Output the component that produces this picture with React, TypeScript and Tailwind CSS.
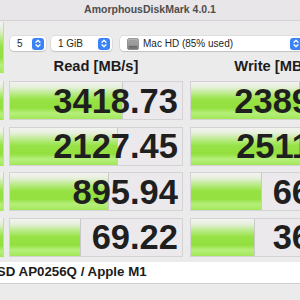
import React from "react";

const green =
  "bg-[linear-gradient(to_bottom,#f3f3f1_0%,#e6efdb_14%,#b4ea7c_34%,#97e246_48%,#92e03e_70%,#b6ef7c_84%,#a2e858_100%)]";

function Stepper() {
  return (
    <span className="flex h-[12px] w-[12px] items-center justify-center rounded-[3px] bg-[#3a83f6]">
      <svg width="6" height="9" viewBox="0 0 6 9" fill="none" stroke="white" strokeWidth="1.3" strokeLinecap="round" strokeLinejoin="round">
        <path d="M1 3.3 3 1.3 5 3.3" />
        <path d="M1 5.7 3 7.7 5 5.7" />
      </svg>
    </span>
  );
}

function Select({ w, children }: { w: string; children: React.ReactNode }) {
  return (
    <div className={`flex h-[15px] shrink-0 items-center justify-between rounded-[4px] bg-white pl-[7px] pr-[2px] text-[10px] text-[#262626] shadow-[0_0_0_0.5px_rgba(0,0,0,0.12),0_1px_1px_rgba(0,0,0,0.12)] ${w}`}>
      <span className="flex items-center gap-[3px]">{children}</span>
      <Stepper />
    </div>
  );
}

function Disk() {
  return (
    <svg width="12" height="12" viewBox="0 0 12 12">
      <defs>
        <linearGradient id="dk" x1="0" y1="0" x2="0" y2="1">
          <stop offset="0" stopColor="#b9b9b9" />
          <stop offset="1" stopColor="#7d7d7d" />
        </linearGradient>
      </defs>
      <rect x="0.5" y="0.5" width="11" height="11" rx="1.5" fill="url(#dk)" stroke="#6e6e6e" strokeWidth="0.6" />
      <rect x="2" y="2" width="8" height="4" rx="0.8" fill="#9d9d9d" />
      <rect x="2" y="8" width="8" height="0.8" fill="#5f5f5f" />
      <rect x="2" y="9.5" width="8" height="0.8" fill="#5f5f5f" />
    </svg>
  );
}

function Cell({ value, text }: { value: number; text: string }) {
  const w = Math.round(25 * (Math.log10(value) + 1));
  return (
    <div className="relative flex h-full w-[174px] shrink-0 items-center justify-end overflow-hidden border border-[#d4d2d4] bg-[#ebe9eb] pr-[4px]">
      <div className={`absolute left-0 top-0 h-full border-r border-[#c9c9c9] ${green}`} style={{ width: w }} />
      <span className="relative mt-[1px] text-[34.5px] font-bold leading-none text-[#1f1f1f]">{text}</span>
    </div>
  );
}

const rows = [
  { r: 3418.73, rt: "3418.73", w: 2389.51, wt: "2389.51" },
  { r: 2127.45, rt: "2127.45", w: 2511.37, wt: "2511.37" },
  { r: 895.94, rt: "895.94", w: 66.12, wt: "66.12" },
  { r: 69.22, rt: "69.22", w: 36.48, wt: "36.48" },
];

export default function App() {
  return (
    <div className="h-[300px] w-[300px] overflow-hidden bg-[#ecebec] font-['Liberation_Sans',Arial,sans-serif]">
      <div className="flex h-[21px] items-center justify-center border-b border-[#d3d1d3] bg-[#e8e6e8] text-[10.5px] font-bold text-[#4e4e4e]">
        AmorphousDiskMark 4.0.1
      </div>
      <div className="flex">
        <div className={`mt-[1px] h-[51px] w-[4px] shrink-0 border-r border-[#cfcfcf] ${green}`} />
        <div className="ml-[5px] flex flex-col">
          <div className="mt-[15px] flex gap-[5px] pl-[1px]">
            <Select w="w-[36px]">5</Select>
            <Select w="w-[61px] mr-[3px]">1 GiB</Select>
            <Select w="w-[184px]">
              <Disk />
              <span className="ml-[1px]">Mac HD (85% used)</span>
            </Select>
          </div>
          <div className="mt-[7px] flex gap-[7px] text-[14.7px] font-bold leading-[17px] text-[#1c1c1c]">
            <div className="w-[174px] shrink-0 text-center">Read [MB/s]</div>
            <div className="w-[174px] shrink-0 text-center">Write [MB/s]</div>
          </div>
        </div>
      </div>
      <div className="mt-[6px] flex flex-col gap-[6.5px]">
        {rows.map((row) => (
          <div key={row.rt} className="flex h-[39px]">
            <div className={`h-full w-[4px] shrink-0 border-r border-[#cfcfcf] ${green}`} />
            <div className="ml-[5px] flex h-full gap-[7px]">
              <Cell value={row.r} text={row.rt} />
              <Cell value={row.w} text={row.wt} />
            </div>
          </div>
        ))}
      </div>
      <div className="mt-[5px] flex h-[22px] items-center overflow-hidden whitespace-nowrap border-b border-[#d0ced0] bg-white">
        <span className="ml-[-12px] text-[13.3px] font-bold text-[#1c1c1c]">SSD AP0256Q / Apple M1</span>
      </div>
    </div>
  );
}
